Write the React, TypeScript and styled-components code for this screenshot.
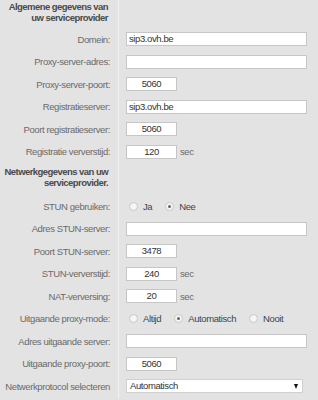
import React from "react"
import styled, { createGlobalStyle } from "styled-components"

const GlobalStyle = createGlobalStyle`
  html, body {
    margin: 0;
    padding: 0;
    background: #e3e3e3;
  }
`

const Form = styled.div`
  width: 318px;
  height: 400px;
  background: #e3e3e3;
  display: grid;
  grid-template-columns: 118px 1fr;
  grid-auto-rows: min-content;
  overflow: hidden;
  font-family: "Liberation Sans", Arial, sans-serif;
  font-size: 9.5px;
  letter-spacing: -0.4px;
`

const Heading = styled.div<{ $pt: number; $pb: number }>`
  padding: ${(p) => p.$pt}px 10px ${(p) => p.$pb}px 4px;
  text-align: right;
  line-height: 11px;
  font-weight: bold;
  letter-spacing: -0.55px;
  color: #4a4a4a;
  white-space: nowrap;
`

const Label = styled.div`
  height: 22.5px;
  display: flex;
  align-items: center;
  justify-content: flex-end;
  padding-right: 8px;
  color: #6a6a6a;
  white-space: nowrap;
`

const Cell = styled.div`
  border-left: 1px solid #f3f3f3;
  padding-left: 7px;
  display: flex;
  align-items: center;
  gap: 3px;
  color: #6a6a6a;
`

const Field = styled.div<{ $w: number; $center?: boolean }>`
  box-sizing: border-box;
  width: ${(p) => p.$w}px;
  height: 14px;
  background: #fff;
  border: 1px solid #c6c6c6;
  line-height: 12px;
  color: #333;
  padding: 0 2px;
  text-align: ${(p) => (p.$center ? "center" : "left")};
`

const Select = styled(Field)`
  display: flex;
  justify-content: space-between;
  align-items: center;
  padding: 0 4px 0 3px;
  border-color: #d0d0d0;
`

const Arrow = styled.span`
  width: 0;
  height: 0;
  border-left: 2.5px solid transparent;
  border-right: 2.5px solid transparent;
  border-top: 5px solid #111;
`

const RadioGroup = styled.div`
  display: flex;
  align-items: center;
  gap: 13px;
  padding-left: 3px;
`

const RadioItem = styled.label`
  display: flex;
  align-items: center;
  gap: 5px;
  color: #444;
`

const Dot = styled.span<{ $on?: boolean }>`
  box-sizing: border-box;
  width: 9px;
  height: 9px;
  border-radius: 50%;
  border: 1px solid #c8c8c8;
  background: #f5f5f5;
  position: relative;
  &::after {
    content: "";
    display: ${(p) => (p.$on ? "block" : "none")};
    position: absolute;
    left: 2px;
    top: 2px;
    width: 3px;
    height: 3px;
    border-radius: 50%;
    background: #666;
  }
`

type Row =
  | { kind: "head"; text: string[]; pt: number; pb: number }
  | { kind: "text"; label: string; value?: string }
  | { kind: "num"; label: string; value?: string; unit?: string }
  | { kind: "radio"; label: string; options: string[]; checked: number }
  | { kind: "select"; label: string; value: string }

const rows: Row[] = [
  { kind: "head", text: ["Algemene gegevens van", "uw serviceprovider"], pt: 1, pb: 5 },
  { kind: "text", label: "Domein:", value: "sip3.ovh.be" },
  { kind: "text", label: "Proxy-server-adres:" },
  { kind: "num", label: "Proxy-server-poort:", value: "5060" },
  { kind: "text", label: "Registratieserver:", value: "sip3.ovh.be" },
  { kind: "num", label: "Poort registratieserver:", value: "5060" },
  { kind: "num", label: "Registratie ververstijd:", value: "120", unit: "sec" },
  { kind: "head", text: ["Netwerkgegevens van uw", "serviceprovider."], pt: 3, pb: 7 },
  { kind: "radio", label: "STUN gebruiken:", options: ["Ja", "Nee"], checked: 1 },
  { kind: "text", label: "Adres STUN-server:" },
  { kind: "num", label: "Poort STUN-server:", value: "3478" },
  { kind: "num", label: "STUN-ververstijd:", value: "240", unit: "sec" },
  { kind: "num", label: "NAT-verversing:", value: "20", unit: "sec" },
  { kind: "radio", label: "Uitgaande proxy-mode:", options: ["Altijd", "Automatisch", "Nooit"], checked: 1 },
  { kind: "text", label: "Adres uitgaande server:" },
  { kind: "num", label: "Uitgaande proxy-poort:", value: "5060" },
  { kind: "select", label: "Netwerkprotocol selecteren", value: "Automatisch" },
]

function renderValue(row: Row) {
  switch (row.kind) {
    case "text":
      return <Field $w={181}>{row.value}</Field>
    case "num":
      return (
        <>
          <Field $w={51} $center>
            {row.value}
          </Field>
          {row.unit}
        </>
      )
    case "radio":
      return (
        <RadioGroup>
          {row.options.map((o, i) => (
            <RadioItem key={o}>
              <Dot $on={i === row.checked} />
              {o}
            </RadioItem>
          ))}
        </RadioGroup>
      )
    case "select":
      return (
        <Select $w={177}>
          {row.value}
          <Arrow />
        </Select>
      )
    default:
      return null
  }
}

export default function App() {
  return (
    <>
      <GlobalStyle />
      <Form>
        {rows.map((row, i) =>
          row.kind === "head" ? (
            <React.Fragment key={i}>
              <Heading $pt={row.pt} $pb={row.pb}>
                {row.text.map((t) => (
                  <div key={t}>{t}</div>
                ))}
              </Heading>
              <Cell />
            </React.Fragment>
          ) : (
            <React.Fragment key={i}>
              <Label>{row.label}</Label>
              <Cell>{renderValue(row)}</Cell>
            </React.Fragment>
          )
        )}
        <div />
        <Cell />
      </Form>
    </>
  )
}
